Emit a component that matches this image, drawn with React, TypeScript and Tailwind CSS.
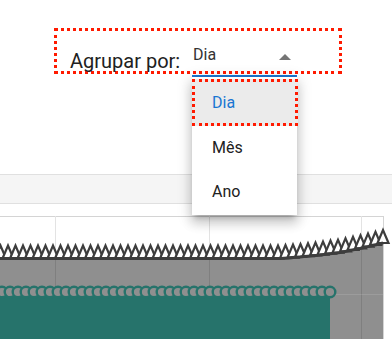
const lineY = (x: number) => {
  // piecewise linear approximation of the series line (chart-relative y)
  const pts: [number, number][] = [
    [0, 42.5],
    [280, 42.5],
    [300, 41],
    [320, 39],
    [340, 36.5],
    [360, 32.5],
    [383, 27],
  ];
  for (let i = 1; i < pts.length; i++) {
    const [x0, y0] = pts[i - 1];
    const [x1, y1] = pts[i];
    if (x <= x1) return y0 + ((y1 - y0) * (x - x0)) / (x1 - x0);
  }
  return pts[pts.length - 1][1];
};

const Chart = () => {
  const linePts: string[] = [];
  for (let x = 0; x <= 383; x += 4) linePts.push(`${x},${lineY(x).toFixed(2)}`);
  linePts.push(`383,${lineY(383)}`);

  const triXs: number[] = [];
  for (let x = 383; x >= 0; x -= 7.5) triXs.unshift(x);

  const circleXs: number[] = [];
  for (let x = 330; x >= 0; x -= 8) circleXs.unshift(x);

  return (
    <svg width="392" height="123" viewBox="0 0 392 123" className="block">
      {/* grid */}
      <line x1="0" y1="0.5" x2="384" y2="0.5" stroke="#d4d4d4" />
      <line x1="383.5" y1="0" x2="383.5" y2="123" stroke="#d4d4d4" />
      {[55.5, 209.5, 361.5].map((x) => (
        <line key={x} x1={x} y1="0" x2={x} y2="123" stroke="#e3e3e3" />
      ))}

      {/* gray area */}
      <path
        d={`M${linePts.join(" L")} L383,123 L0,123 Z`}
        fill="rgba(0,0,0,0.44)"
      />
      <line x1="330" y1="78.5" x2="383" y2="78.5" stroke="rgba(255,255,255,0.12)" />

      {/* teal area */}
      <rect x="0" y="76" width="330" height="47" fill="#26736b" />
      {circleXs.map((x) => (
        <circle key={x} cx={x} cy="76" r="5.3" fill="#8f8f8f" stroke="#26736b" strokeWidth="2.4" />
      ))}

      {/* triangle markers */}
      {triXs.map((x) => {
        const y = lineY(x);
        return (
          <polygon
            key={x}
            points={`${x - 5.5},${y} ${x},${y - 13} ${x + 5.5},${y}`}
            fill="#fff"
            stroke="#3d3d3d"
            strokeWidth="2.2"
            strokeLinejoin="miter"
          />
        );
      })}
      <polyline points={linePts.join(" ")} fill="none" stroke="#3d3d3d" strokeWidth="3" />
    </svg>
  );
};

export default function App() {
  return (
    <div className="relative w-[392px] h-[339px] overflow-hidden bg-white font-['Roboto',sans-serif]">
      {/* Agrupar por */}
      <div className="mt-[28px] ml-[54px] w-[288px] h-[46px] border-[3px] border-dotted border-[#ff1a00] flex items-start">
        <span className="mt-[18px] ml-[13px] w-[122px] text-[20px] leading-[24px] text-[#212121]">
          Agrupar por:
        </span>
        <div className="relative mt-[14px] w-[105px] h-[32px] shrink-0 border-b-2 border-[#1976d2]">
          <span className="block pl-[1px] text-[16px] leading-[20px] text-[#333]">Dia</span>
          <svg className="absolute left-[87px] top-[9px]" width="12" height="6" viewBox="0 0 12 6">
            <path d="M0 6 L6 0 L12 6 Z" fill="#757575" />
          </svg>
        </div>
      </div>

      {/* band */}
      <div className="mt-[100px] h-[30px] border-y border-[#e0e0e0] bg-[#f5f5f5]" />

      <div className="mt-[12px]">
        <Chart />
      </div>

      {/* open menu */}
      <div className="absolute left-[192px] top-[77px] w-[105px] h-[138px] bg-white pt-[2px] shadow-[0px_5px_5px_-3px_rgba(0,0,0,0.2),0px_8px_10px_1px_rgba(0,0,0,0.14),0px_3px_14px_2px_rgba(0,0,0,0.12)]">
        <div className="h-[47px] w-[106px] border-[3px] border-dotted border-[#ff1a00] bg-[#ebebeb] flex items-center pl-[17px] text-[16px] leading-[20px] text-[#1976d2]">
          Dia
        </div>
        <div className="h-[44px] flex items-center pl-[20px] text-[16px] leading-[20px] text-[#212121]">
          Mês
        </div>
        <div className="h-[44px] flex items-center pl-[20px] text-[16px] leading-[20px] text-[#212121]">
          Ano
        </div>
      </div>
    </div>
  );
}
